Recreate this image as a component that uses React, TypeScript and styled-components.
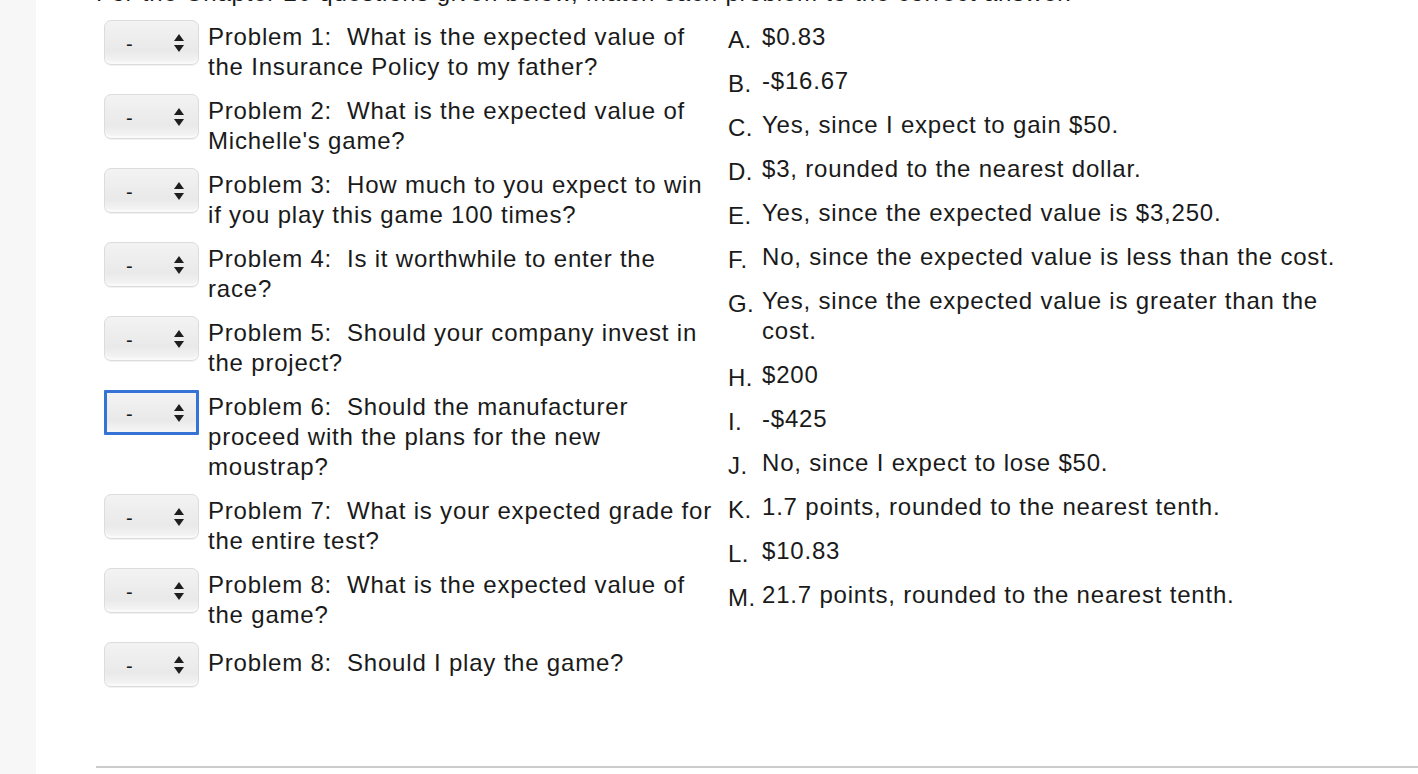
import styled, { createGlobalStyle } from "styled-components"

const problems = [
    { id: 1, text: "What is the expected value of the Insurance Policy to my father?" },
    { id: 2, text: "What is the expected value of Michelle's game?" },
    { id: 3, text: "How much to you expect to win if you play this game 100 times?" },
    { id: 4, text: "Is it worthwhile to enter the race?" },
    { id: 5, text: "Should your company invest in the project?" },
    { id: 6, text: "Should the manufacturer proceed with the plans for the new moustrap?", focused: true },
    { id: 7, text: "What is your expected grade for the entire test?" },
    { id: 8, text: "What is the expected value of the game?" },
    { id: 8, text: "Should I play the game?", single: true },
]

const answers = [
    ["A", "$0.83"],
    ["B", "-$16.67"],
    ["C", "Yes, since I expect to gain $50."],
    ["D", "$3, rounded to the nearest dollar."],
    ["E", "Yes, since the expected value is $3,250."],
    ["F", "No, since the expected value is less than the cost."],
    ["G", "Yes, since the expected value is greater than the cost."],
    ["H", "$200"],
    ["I", "-$425"],
    ["J", "No, since I expect to lose $50."],
    ["K", "1.7 points, rounded to the nearest tenth."],
    ["L", "$10.83"],
    ["M", "21.7 points, rounded to the nearest tenth."],
]

function Arrows() {
    return (
        <svg width="10" height="18" viewBox="0 0 10 18">
            <path d="M5 0 L10 7 L0 7 Z" fill="#1e1e1e" />
            <path d="M0 11 L10 11 L5 18 Z" fill="#1e1e1e" />
        </svg>
    )
}

export default function App() {
    return (
        <>
            <GlobalStyle />
            <Page>
                <Sidebar />
                <Main>
                    <Heading>For the Chapter 20 questions given below, match each problem to the correct answer.</Heading>
                    <Columns>
                        <ProblemList>
                            {problems.map((p, i) => (
                                <ProblemRow key={i} $single={!!p.single}>
                                    <SelectBox $focused={!!p.focused}>
                                        <Dash>-</Dash>
                                        <Arrows />
                                    </SelectBox>
                                    <ProblemText $single={!!p.single}>Problem {p.id}:{"\u00a0 "}{p.text}</ProblemText>
                                </ProblemRow>
                            ))}
                        </ProblemList>
                        <AnswerList>
                            {answers.map(([letter, text]) => (
                                <AnswerRow key={letter}>
                                    <Letter>{letter}.</Letter>
                                    <AnswerText>{text}</AnswerText>
                                </AnswerRow>
                            ))}
                        </AnswerList>
                    </Columns>
                    <Divider />
                </Main>
            </Page>
        </>
    )
}

const GlobalStyle = createGlobalStyle`
    html, body {
        margin: 0;
        padding: 0;
        background: #fff;
        overflow: hidden;
    }
    body {
        font-family: "Liberation Sans", Arial, Helvetica, sans-serif;
        color: #1a1a1a;
        letter-spacing: 0.8px;
    }
`

const Page = styled.div`
    display: flex;
    height: 774px;
    overflow: hidden;
`

const Sidebar = styled.div`
    width: 36px;
    flex-shrink: 0;
    background: #f7f7f7;
`

const Main = styled.div`
    flex: 1;
    padding-left: 60px;
    display: flex;
    flex-direction: column;
`

const Heading = styled.div`
    font-size: 24px;
    line-height: 30px;
    margin-top: -22px;
    margin-bottom: 12px;
    white-space: nowrap;
`

const Columns = styled.div`
    display: flex;
    align-items: flex-start;
`

const ProblemList = styled.div`
    width: 632px;
    padding-left: 8px;
    box-sizing: border-box;
    display: flex;
    flex-direction: column;
    gap: 12px;
`

const ProblemRow = styled.div<{ $single: boolean }>`
    display: flex;
    align-items: ${p => p.$single ? "center" : "flex-start"};
    gap: 9px;
`

const SelectBox = styled.div<{ $focused: boolean }>`
    width: 95px;
    height: 45px;
    box-sizing: border-box;
    flex-shrink: 0;
    display: flex;
    align-items: center;
    justify-content: space-between;
    padding: 0 ${p => p.$focused ? 12 : 14}px 0 ${p => p.$focused ? 19 : 21}px;
    border: ${p => p.$focused ? "3px solid #3574d4" : "1px solid #dcdcdc"};
    border-radius: ${p => p.$focused ? "1px" : "7px"};
    background: linear-gradient(#f3f3f3, #e9e9e9 70%, #f6f6f6);
    box-shadow: ${p => p.$focused ? "none" : "inset 0 -2px 0 #fafafa, 0 1px 1px rgba(0,0,0,0.06)"};
`

const Dash = styled.span`
    font-size: 20px;
    line-height: 1;
    margin-top: 3px;
`

const ProblemText = styled.div<{ $single: boolean }>`
    width: 514px;
    font-size: 24px;
    line-height: 30px;
    padding-top: ${p => p.$single ? 0 : 2}px;
    padding-bottom: ${p => p.$single ? 4 : 0}px;
`

const AnswerList = styled.div`
    display: flex;
    flex-direction: column;
    gap: 14px;
    padding-top: 2px;
`

const AnswerRow = styled.div`
    display: flex;
    align-items: flex-start;
`

const Letter = styled.span`
    width: 34px;
    height: 30px;
    box-sizing: border-box;
    flex-shrink: 0;
    font-size: 24px;
    letter-spacing: 0.4px;
    line-height: 24px;
    padding-top: 6px;
    white-space: nowrap;
`

const AnswerText = styled.div`
    max-width: 600px;
    font-size: 24px;
    line-height: 30px;
`

const Divider = styled.div`
    margin-top: auto;
    margin-bottom: 6px;
    height: 2px;
    background: #cccccc;
`
